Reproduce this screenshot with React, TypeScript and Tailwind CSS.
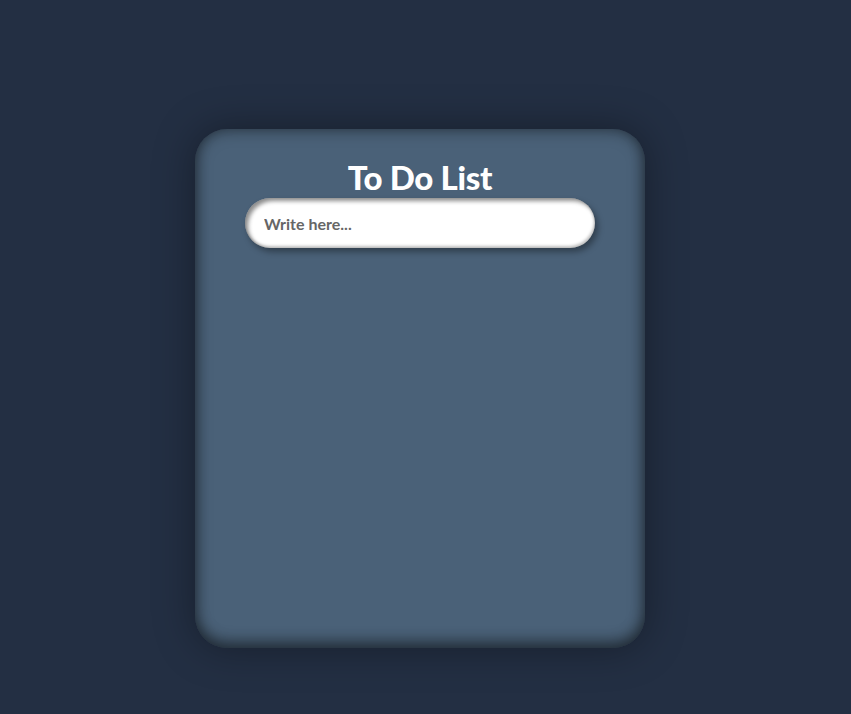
import React, { useState } from 'react';

export default function App() {
  const [text, setText] = useState('');

  return (
    <div className="min-h-[714px] w-full bg-[#232f43] pt-[129px] pr-[11px] flex justify-center" style={{ fontFamily: '"Lato", "Noto Sans", sans-serif' }}>
      {/* Card */}
      <div className="w-[450px] h-[519px] rounded-[32px] bg-[#4a6178] shadow-[inset_0_-8px_14px_rgba(0,0,0,0.3),inset_0_0_16px_rgba(0,0,0,0.5),0_0_40px_rgba(0,0,0,0.35)] flex flex-col items-center pt-[32px]">
        <h1 className="text-[33px] leading-[33px] font-black text-white tracking-[-0.3px]">To Do List</h1>
        <input
          value={text}
          onChange={(e) => setText(e.target.value)}
          placeholder="Write here..."
          className="mt-[4px] w-[350px] h-[50px] rounded-full bg-white pl-[19px] pr-4 text-[16px] font-bold text-[#555] placeholder:text-[#666] outline-none shadow-[inset_3px_3px_4px_rgba(0,0,0,0.45),inset_-1px_-2px_3px_rgba(0,0,0,0.25),3px_4px_6px_rgba(0,0,0,0.35)]"
        />
      </div>
    </div>
  );
}
